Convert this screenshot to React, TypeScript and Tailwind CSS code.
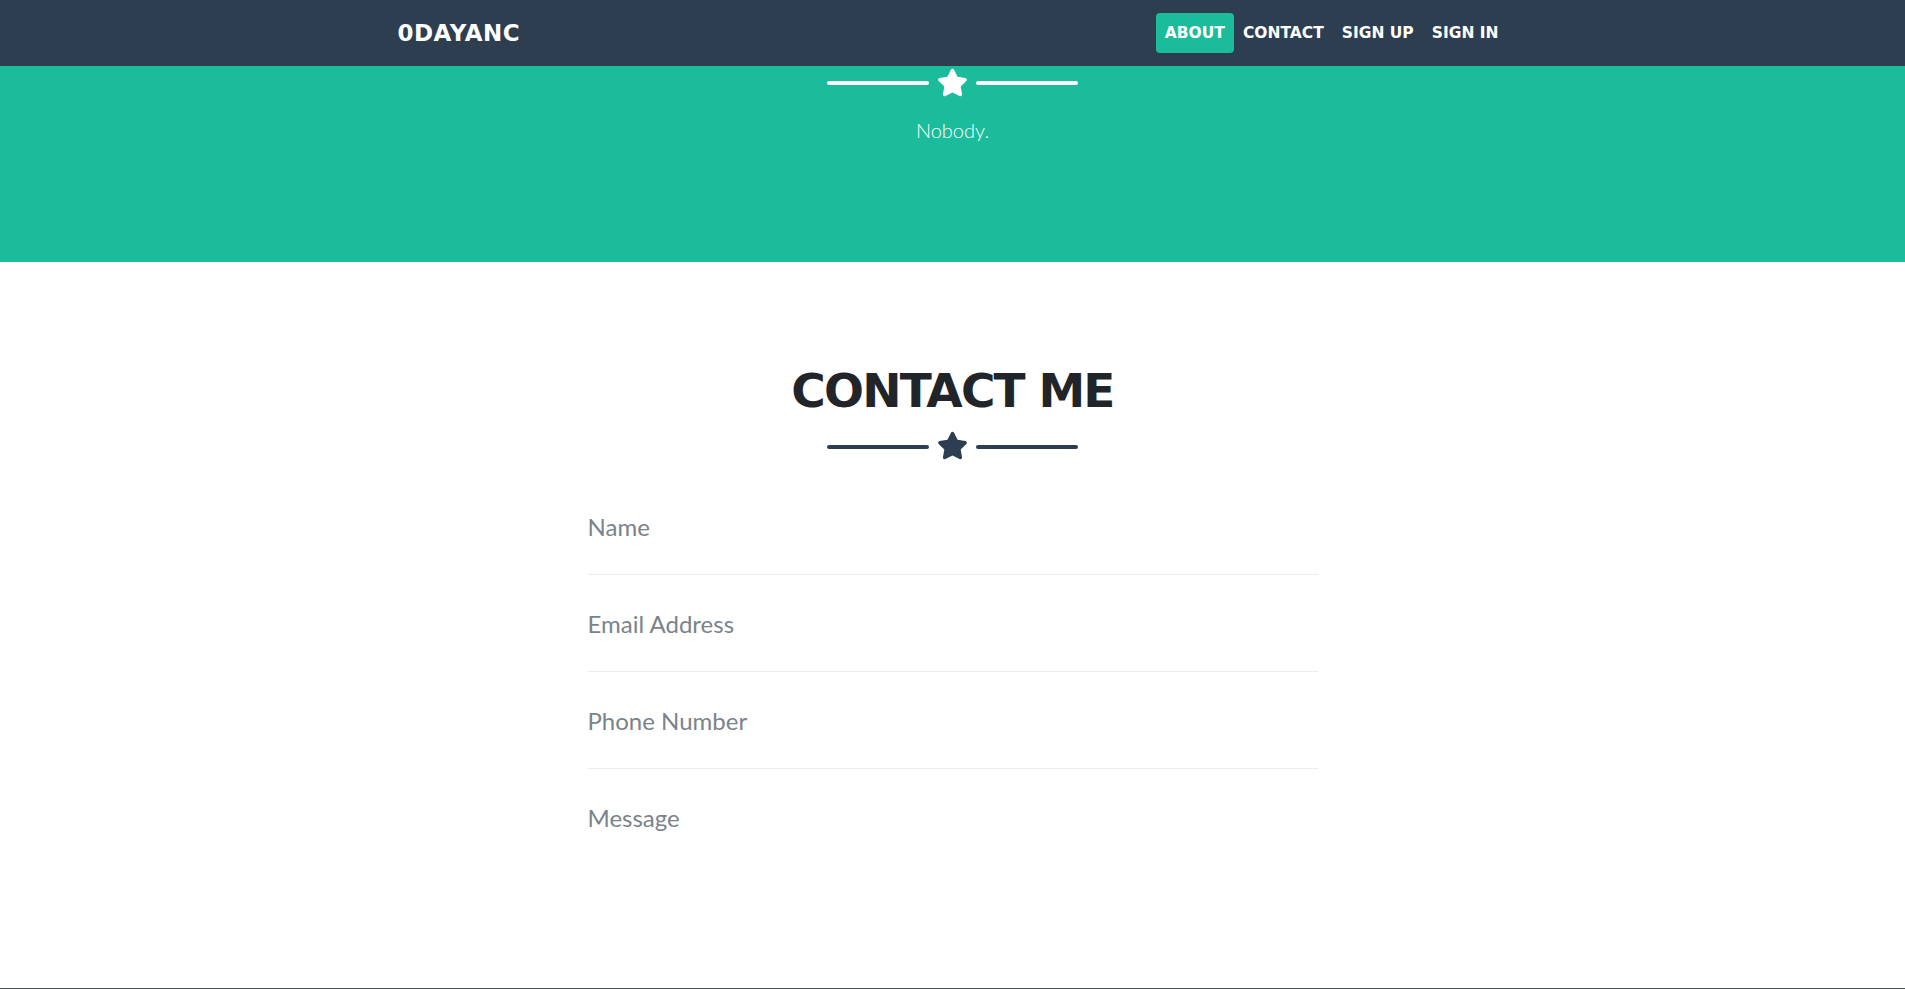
import { FaStar } from 'react-icons/fa'

const navLinks = ['About', 'Contact', 'Sign Up', 'Sign In']
const fields = ['Name', 'Email Address', 'Phone Number', 'Message']

function Divider({ light }: { light?: boolean }) {
  const line = light ? 'bg-white' : 'bg-[#2c3e50]'
  return (
    <div className="flex items-center justify-center gap-[8px]">
      <div className={`w-[102px] h-[4px] rounded-full ${line} ${light ? '' : 'mt-[3px]'}`} />
      <FaStar className={`w-[31px] h-[29px] ${light ? 'text-white' : 'text-[#2c3e50]'}`} />
      <div className={`w-[102px] h-[4px] rounded-full ${line} ${light ? '' : 'mt-[3px]'}`} />
    </div>
  )
}

export default function App() {
  return (
    <div className="h-[989px] flex flex-col overflow-hidden bg-white font-['Lato',sans-serif]">
      {/* Navbar */}
      <nav className="h-[66px] shrink-0 bg-[#2c3e50]">
        <div className="w-[1140px] mx-auto px-[15px] h-full flex items-center justify-between">
          <span className="font-['DejaVu_Sans',sans-serif] font-bold text-[23px] tracking-[0.5px] text-white">0DAYANC</span>
          <ul className="flex items-center">
            {navLinks.map((l, i) => (
              <li key={l}>
                <a
                  className={`block px-[9px] h-[40px] leading-[40px] rounded-[4px] font-['DejaVu_Sans',sans-serif] font-bold text-[15.5px] uppercase text-white ${
                    i === 0 ? 'bg-[#1abc9c]' : ''
                  }`}
                >
                  {l}
                </a>
              </li>
            ))}
          </ul>
        </div>
      </nav>

      {/* Masthead (scrolled) */}
      <header className="h-[196px] shrink-0 bg-[#1abc9c] pt-[2px]">
        <Divider light />
        <p className="mt-[18px] text-center text-white font-light text-[20px] leading-[30px]">Nobody.</p>
      </header>

      {/* Contact */}
      <section className="flex-1 pt-[101px]">
        <h2 className="text-center font-['DejaVu_Sans',sans-serif] font-bold text-[47px] leading-[56px] tracking-[-1.8px] text-[#212529] uppercase">
          Contact Me
        </h2>
        <div className="mt-[12px]">
          <Divider />
        </div>
        <form className="w-[730px] mx-auto mt-[18px]">
          {fields.map((f, i) => (
            <div
              key={f}
              className={`h-[97px] pt-[31px] ${i < fields.length - 1 ? 'border-b border-[#e9ecef]' : ''}`}
            >
              <div className="text-[24px] leading-[36px] text-[#7b838a]">{f}</div>
            </div>
          ))}
        </form>
      </section>

      <div className="h-px shrink-0 bg-[#4a5055] shadow-[0_-2px_4px_rgba(0,0,0,0.06)]" />
    </div>
  )
}
